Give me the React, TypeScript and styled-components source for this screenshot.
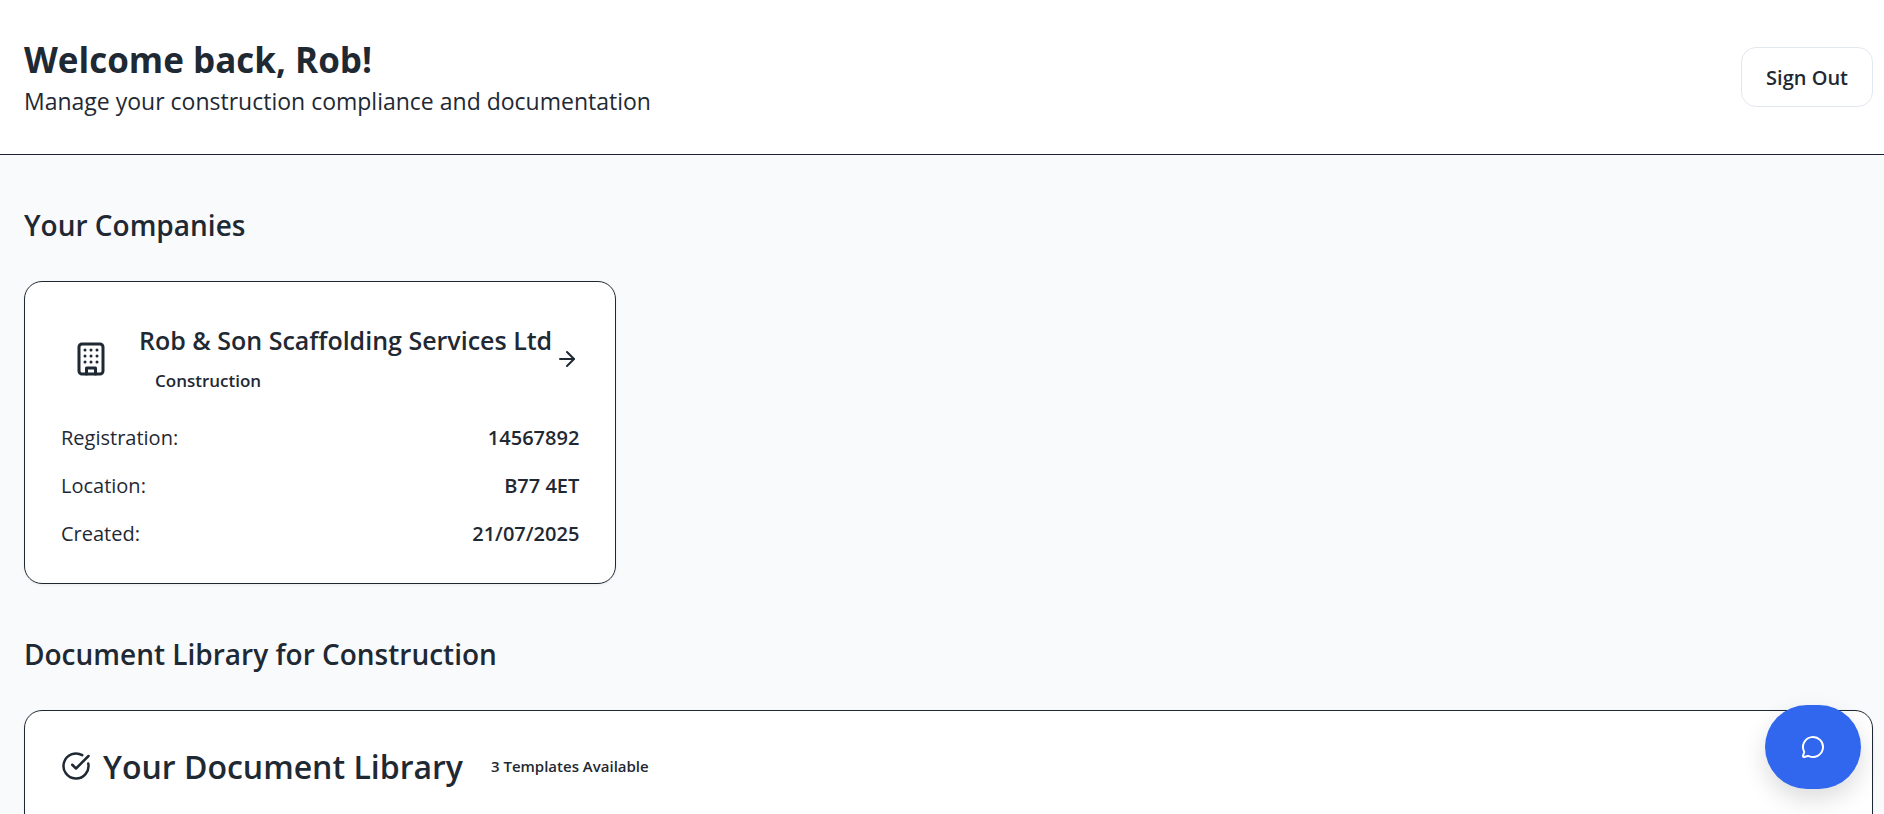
import React from "react";
import styled, { createGlobalStyle } from "styled-components";
import { ArrowRight, CircleCheckBig, MessageCircle } from "lucide-react";

const ink = "#1f2933";

const GlobalStyle = createGlobalStyle`
  *, *::before, *::after { box-sizing: border-box; }
  body {
    margin: 0;
    background: #f9fafc;
    color: ${ink};
    font-family: "Open Sans", "Noto Sans", sans-serif;
  }
  h1, h2, h3, p, dl, dd { margin: 0; }
`;

const Shell = styled.div`
  display: flex;
  flex-direction: column;
  height: 100vh;
`;

const Header = styled.header`
  display: flex;
  flex: none;
  align-items: center;
  justify-content: space-between;
  padding: 36px 11px 36px 24px;
  background: #fff;
  border-bottom: 1px solid #1e1f37;
`;

const Greeting = styled.h1`
  font-size: 35px;
  font-weight: 700;
  line-height: 48px;
`;

const Tagline = styled.p`
  font-size: 23px;
  line-height: 34px;
`;

const SignOutButton = styled.button`
  height: 60px;
  padding: 0 24px;
  border: 1px solid #e2e8f0;
  border-radius: 15px;
  background: #fff;
  color: ${ink};
  font-family: inherit;
  font-size: 20px;
  font-weight: 600;
  cursor: pointer;
`;

const Main = styled.main`
  flex: 1;
  min-height: 0;
  padding: 48px 11px 48px 24px;
  overflow-y: auto;
  scrollbar-width: none;
`;

const Section = styled.section`
  display: flex;
  flex-direction: column;
  gap: 34px;

  & + & { margin-top: 48px; }
`;

const SectionTitle = styled.h2`
  font-size: 28px;
  font-weight: 600;
  line-height: 44px;
`;

const CompanyGrid = styled.div`
  display: grid;
  grid-template-columns: repeat(3, minmax(0, 1fr));
  gap: 36px;
`;

const Card = styled.article`
  padding: 36px 36px 34px;
  border: 1px solid ${ink};
  border-radius: 18px;
  background: #fff;
  box-shadow: 0 1px 3px rgba(0, 0, 0, 0.06);
`;

const LibraryCard = styled(Card)`
  min-height: 300px;
`;

const CompanyHeader = styled.div`
  display: flex;
  align-items: center;
  margin-bottom: 24px;
`;

const CompanyIcon = styled.div`
  display: flex;
  flex: none;
  margin-right: 18px;
  padding: 12px;
`;

const CompanyHeading = styled.div`
  flex: 1;
  min-width: 0;
`;

const CompanyName = styled.h3`
  font-size: 25px;
  font-weight: 600;
  line-height: 45px;
  white-space: nowrap;
`;

const Badge = styled.span<{ $compact?: boolean }>`
  display: block;
  padding: 0 16px;
  font-size: ${({ $compact }) => ($compact ? "15px" : "17px")};
  font-weight: 600;
  line-height: 36px;
`;

const Details = styled.dl`
  display: grid;
  gap: 18px;
`;

const DetailRow = styled.div`
  display: flex;
  justify-content: space-between;
  font-size: 20px;
  line-height: 30px;
`;

const DetailValue = styled.dd`
  font-weight: 600;
`;

const LibraryHeader = styled.div`
  display: flex;
  align-items: center;
  gap: 12px;
  line-height: 36px;
`;

const LibraryTitle = styled.h3`
  padding-top: 2px;
  font-size: 32px;
  font-weight: 600;
`;

const ChatButton = styled.button`
  position: fixed;
  right: 23px;
  bottom: 25px;
  display: flex;
  align-items: center;
  justify-content: center;
  width: 96px;
  height: 84px;
  padding: 0;
  border: 0;
  border-radius: 42px;
  background: #3067ee;
  color: #fff;
  box-shadow: 0 10px 24px rgba(0, 0, 0, 0.14);
  cursor: pointer;
`;

const BuildingIcon = () => (
  <svg
    width="36"
    height="36"
    viewBox="0 0 24 24"
    fill="none"
    stroke="currentColor"
    strokeWidth="2"
    strokeLinecap="round"
    strokeLinejoin="round"
    aria-hidden="true"
  >
    <rect x="4" y="2" width="16" height="20" rx="2" />
    <path d="M9 22v-4h6v4" />
    <path d="M8 6h.01M12 6h.01M16 6h.01M8 10h.01M12 10h.01M16 10h.01M8 14h.01M12 14h.01M16 14h.01" />
  </svg>
);

const details = [
  ["Registration:", "14567892"],
  ["Location:", "B77 4ET"],
  ["Created:", "21/07/2025"],
];

export default function App() {
  return (
    <Shell>
      <GlobalStyle />
      <Header>
        <div>
          <Greeting>Welcome back, Rob!</Greeting>
          <Tagline>Manage your construction compliance and documentation</Tagline>
        </div>
        <SignOutButton type="button">Sign Out</SignOutButton>
      </Header>
      <Main>
        <Section>
          <SectionTitle>Your Companies</SectionTitle>
          <CompanyGrid>
            <Card>
              <CompanyHeader>
                <CompanyIcon>
                  <BuildingIcon />
                </CompanyIcon>
                <CompanyHeading>
                  <CompanyName>Rob &amp; Son Scaffolding Services Ltd</CompanyName>
                  <Badge>Construction</Badge>
                </CompanyHeading>
                <ArrowRight size={24} aria-hidden="true" />
              </CompanyHeader>
              <Details>
                {details.map(([label, value]) => (
                  <DetailRow key={label}>
                    <dt>{label}</dt>
                    <DetailValue>{value}</DetailValue>
                  </DetailRow>
                ))}
              </Details>
            </Card>
          </CompanyGrid>
        </Section>
        <Section>
          <SectionTitle>Document Library for Construction</SectionTitle>
          <LibraryCard>
            <LibraryHeader>
              <CircleCheckBig size={30} aria-hidden="true" />
              <LibraryTitle>Your Document Library</LibraryTitle>
              <Badge $compact>3 Templates Available</Badge>
            </LibraryHeader>
          </LibraryCard>
        </Section>
      </Main>
      <ChatButton type="button" aria-label="Open chat">
        <MessageCircle size={24} aria-hidden="true" />
      </ChatButton>
    </Shell>
  );
}
